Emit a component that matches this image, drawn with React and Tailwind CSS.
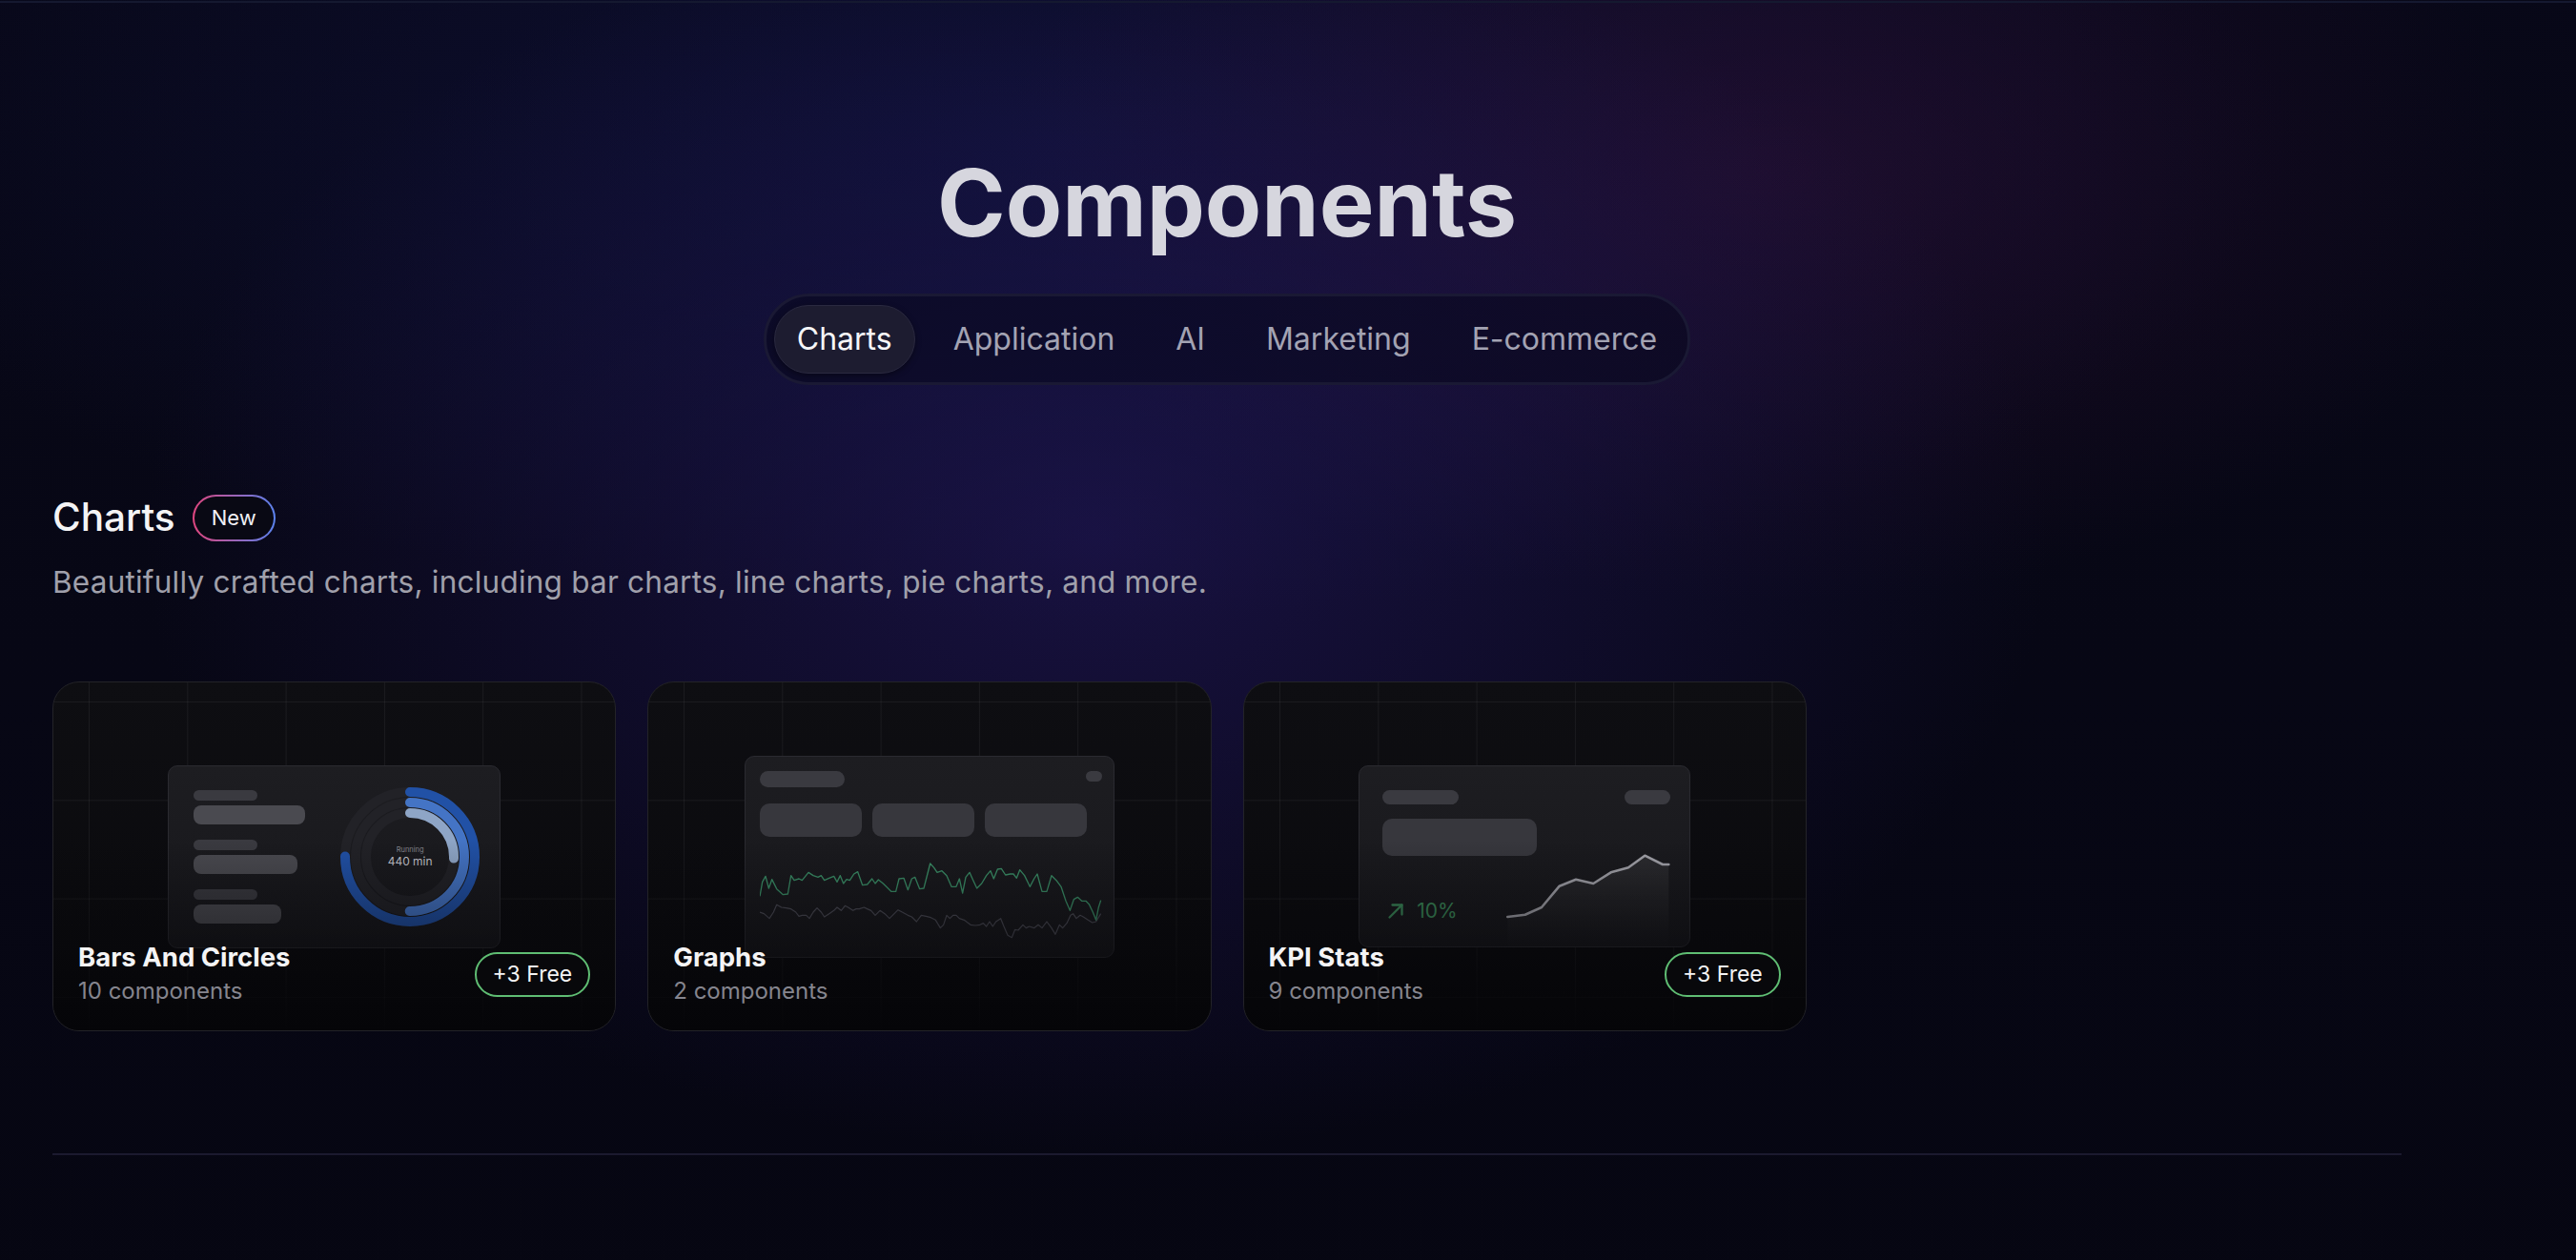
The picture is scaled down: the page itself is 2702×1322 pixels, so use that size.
import React from "react";

const greenPts = [[82,485],[90,440],[100,422],[110,460],[120,432],[135,462],[155,480],[170,478],[180,420],[190,435],[205,430],[215,435],[235,410],[250,420],[265,425],[275,420],[285,435],[300,428],[315,422],[325,440],[335,420],[345,445],[355,432],[365,435],[378,415],[390,408],[405,450],[420,448],[435,430],[445,445],[455,433],[470,445],[480,455],[495,470],[510,470],[520,430],[535,428],[548,465],[560,430],[570,425],[585,462],[598,460],[618,382],[630,395],[640,410],[655,405],[670,420],[685,455],[700,455],[710,430],[720,475],[730,425],[742,410],[752,432],[765,460],[780,445],[795,420],[808,405],[818,430],[830,400],[842,398],[855,418],[870,415],[880,415],[890,428],[900,402],[915,420],[932,455],[945,430],[955,415],[970,470],[985,470],[1000,420],[1015,435],[1030,455],[1045,500],[1058,530],[1070,495],[1082,488],[1095,500],[1108,500],[1118,510],[1130,535],[1140,560],[1148,520],[1155,498]];

const grayPts = [[82,535],[95,540],[112,555],[125,535],[135,512],[150,520],[165,522],[180,525],[195,535],[205,548],[215,545],[228,545],[238,555],[250,535],[262,522],[275,535],[285,550],[300,540],[315,530],[325,520],[338,530],[350,515],[360,520],[375,530],[385,525],[395,525],[410,520],[420,525],[432,530],[445,545],[460,530],[475,540],[490,555],[505,540],[517,528],[530,535],[548,545],[560,550],[575,565],[590,545],[605,548],[620,552],[635,560],[650,585],[660,575],[670,545],[680,555],[690,545],[700,545],[710,555],[725,560],[745,575],[760,577],[775,575],[785,570],[795,580],[805,565],[815,580],[825,565],[840,555],[850,580],[862,608],[875,615],[885,590],[895,592],[910,575],[920,585],[930,580],[945,585],[958,575],[970,585],[985,565],[1000,585],[1012,605],[1025,575],[1035,585],[1048,570],[1060,545],[1068,540],[1078,555],[1090,545],[1100,550],[1115,560],[1128,568],[1140,565],[1155,540]];

const kpiPts = [[1.3,66],[19.7,63.7],[37,56],[55.7,33.7],[73,26.7],[91.3,31],[109.7,19.3],[128,14.3],[145.3,1.7],[164,11],[170.3,11]];

const pts = (a) => a.map((p) => p.join(",")).join(" ");

function Donut() {
  const rings = [
    { r: 68, color: "#2151a6", frac: 0.75 },
    { r: 57, color: "#4474c5", frac: 0.5 },
    { r: 46, color: "#8ea5c6", frac: 0.255 },
  ];
  return (
    <div className="relative h-[148px] w-[148px] shrink-0">
      <svg width="148" height="148" viewBox="0 0 148 148">
        {rings.map(({ r, color, frac }) => {
          const c = 2 * Math.PI * r;
          return (
            <g key={r}>
              <circle cx="74" cy="74" r={r} fill="none" stroke="#222227" strokeWidth="10" />
              <circle
                cx="74"
                cy="74"
                r={r}
                fill="none"
                stroke={color}
                strokeWidth="10"
                strokeLinecap="round"
                strokeDasharray={`${c * frac} ${c}`}
                transform="rotate(-90 74 74)"
              />
            </g>
          );
        })}
      </svg>
      <div className="absolute inset-0 flex flex-col items-center justify-center">
        <span className="text-[7.5px] leading-[9px] text-[#86868e]">Running</span>
        <span className="text-[12px] leading-[15px] text-[#c2c2ca]">440 min</span>
      </div>
    </div>
  );
}

function Card({ title, count, free, children }) {
  return (
    <div className="relative flex h-[367px] items-center justify-center overflow-hidden rounded-[28px] border-[1.5px] border-[#232328] bg-[#0b0b0e] bg-[linear-gradient(to_right,rgba(255,255,255,0.055)_1px,transparent_1px),linear-gradient(to_bottom,rgba(255,255,255,0.055)_1px,transparent_1px),linear-gradient(to_bottom,#0e0e12,#09090c)] bg-[size:103.3px_103.3px,103.3px_103.3px,100%_100%] bg-[position:37px_20px,37px_20px,0_0]">
      {children}
      <div className="absolute inset-x-0 bottom-0 flex h-[200px] items-end justify-between bg-[linear-gradient(to_bottom,rgba(6,6,9,0)_0%,rgba(6,6,9,0.5)_58%,rgba(5,5,8,0.97)_100%)] px-[26px] pb-[25px]">
        <div className="flex flex-col">
          <span className="text-[27.5px] font-bold leading-[30px] text-[#f4f4f5]">{title}</span>
          <span className="mt-[5px] text-[24px] leading-[32px] text-[#85858e]">{count}</span>
        </div>
        {free && (
          <div className="mb-[10px] flex h-[47px] items-center rounded-full border-2 border-[#5fbd73] bg-[#08080b] px-[17px] text-[23px] text-[#f4f4f5]">
            +3 Free
          </div>
        )}
      </div>
    </div>
  );
}

const panelCls =
  "rounded-[10px] border border-[#2a2a30] bg-[linear-gradient(to_bottom,#1d1d21,#17171b)] overflow-hidden";

function BarsPanel() {
  return (
    <div className={`${panelCls} flex h-[192px] w-[349px] items-center pl-[26px]`}>
      <div className="flex w-[117px] flex-col gap-[16px]">
        <div className="flex flex-col gap-[5px]">
          <div className="h-[11px] w-[67px] rounded-full bg-[#3a3a40]" />
          <div className="h-[20px] w-[117px] rounded-[8px] bg-[#4a4a50]" />
        </div>
        <div className="flex flex-col gap-[5px]">
          <div className="h-[11px] w-[67px] rounded-full bg-[#3a3a40]" />
          <div className="h-[20px] w-[109px] rounded-[8px] bg-[#4a4a50]" />
        </div>
        <div className="flex flex-col gap-[5px]">
          <div className="h-[11px] w-[67px] rounded-full bg-[#3a3a40]" />
          <div className="h-[20px] w-[92px] rounded-[8px] bg-[#4a4a50]" />
        </div>
      </div>
      <div className="ml-[36px]">
        <Donut />
      </div>
    </div>
  );
}

function GraphsPanel() {
  return (
    <div className={`${panelCls} h-[212px] w-[388px] pl-[15px] pr-[12px] pt-[15px]`}>
      <div className="flex items-start justify-between">
        <div className="h-[17px] w-[89px] rounded-full bg-[#3a3a40]" />
        <div className="h-[11px] w-[17px] rounded-full bg-[#3a3a40]" />
      </div>
      <div className="mt-[17px] flex gap-[10.5px]">
        <div className="h-[35px] w-[107.5px] rounded-[10px] bg-[#37373d]" />
        <div className="h-[35px] w-[107.5px] rounded-[10px] bg-[#37373d]" />
        <div className="h-[35px] w-[107.5px] rounded-[10px] bg-[#37373d]" />
      </div>
      <svg className="mt-[24px] block" width="360" height="86.67" viewBox="82 370 1080 260">
        <polyline points={pts(grayPts)} fill="none" stroke="#4b4b55" strokeWidth="3.6" strokeLinejoin="round" />
        <polyline points={pts(greenPts)} fill="none" stroke="#3b9068" strokeWidth="4" strokeLinejoin="round" />
      </svg>
    </div>
  );
}

function KpiPanel() {
  const line = pts(kpiPts);
  return (
    <div className={`${panelCls} h-[191px] w-[348px] pl-[24px] pr-[20px] pt-[25px]`}>
      <div className="flex justify-between">
        <div className="h-[15px] w-[80px] rounded-full bg-[#3a3a40]" />
        <div className="h-[15px] w-[48px] rounded-full bg-[#3a3a40]" />
      </div>
      <div className="mt-[15px] h-[39px] w-[161.6px] rounded-[10px] bg-[#37373d]" />
      <div className="flex items-start">
        <div className="ml-[5px] mt-[47px] flex w-[136px] items-center gap-[13px] text-[21px] leading-none text-[#3c8c5b]">
          <svg width="18" height="18" viewBox="0 0 18 18" fill="none" stroke="#3c8c5b" strokeWidth="2.3" strokeLinecap="round" strokeLinejoin="round">
            <path d="M2.5 15.5 L15.5 2.5" />
            <path d="M5.5 2.5 H15.5 V12.5" />
          </svg>
          <span>10%</span>
        </div>
        <svg className="-mt-[2px] block shrink-0" width="172" height="100" viewBox="0 0 172 100">
          <defs>
            <linearGradient id="kpiFill" x1="0" y1="0" x2="0" y2="1">
              <stop offset="0" stopColor="#ffffff" stopOpacity="0.08" />
              <stop offset="1" stopColor="#ffffff" stopOpacity="0" />
            </linearGradient>
          </defs>
          <polygon points={`${line} 170.3,100 1.3,100`} fill="url(#kpiFill)" />
          <polyline points={line} fill="none" stroke="#a3a3aa" strokeWidth="2.6" strokeLinejoin="round" strokeLinecap="round" />
        </svg>
      </div>
    </div>
  );
}

const tabs = ["Charts", "Application", "AI", "Marketing", "E-commerce"];

export default function App() {
  return (
    <div className="min-h-[1322px] w-full bg-[#08081a] bg-[radial-gradient(ellipse_1000px_650px_at_1150px_560px,rgba(38,26,100,0.55),transparent),radial-gradient(ellipse_800px_450px_at_1850px_180px,rgba(70,20,70,0.33),transparent),radial-gradient(ellipse_1300px_500px_at_1100px_150px,rgba(20,24,80,0.5),transparent),linear-gradient(to_bottom,rgba(7,7,15,0.2),rgba(5,5,12,0.55))] font-['Inter',sans-serif]">
      <div className="h-[1px]" />
      <div className="h-[2px] bg-[#151930]" />
      <div className="ml-[55px] w-[2464px] pb-[108px]">
        <h1 className="pt-[161px] text-center text-[97px] font-bold leading-none text-[#d6d6de]">
          Components
        </h1>
        <div className="mt-[47px] flex justify-center">
          <div className="flex gap-[16px] rounded-full border-[3px] border-[#1a1934] bg-[rgba(8,7,28,0.55)] px-[8px] py-[9px]">
            {tabs.map((t, i) => (
              <div
                key={t}
                className={
                  i === 0
                    ? "flex h-[72px] items-center rounded-full border border-[#2a2940] bg-[#1d1c30] px-[23px] text-[32px] text-[#f6f6f8] shadow-[0_2px_6px_rgba(0,0,0,0.4)]"
                    : "flex h-[72px] items-center rounded-full px-[24px] text-[32px] text-[#a3a3b3]"
                }
              >
                {t}
              </div>
            ))}
          </div>
        </div>

        <div className="mt-[115px] flex items-center gap-[18px]">
          <span className="text-[40.5px] font-medium leading-none text-[#f4f4f5]">Charts</span>
          <span className="flex h-[49px] w-[87px] rounded-full bg-[linear-gradient(to_right,#e0467f,#5a82ee)] p-[2px]">
            <span className="flex flex-1 items-center justify-center rounded-full bg-[#090914] text-[22px] text-[#f0f0f5]">
              New
            </span>
          </span>
        </div>
        <p className="mt-[23px] text-[31.5px] leading-[40px] tracking-[0.007em] text-[#a0a0ab]">
          Beautifully crafted charts, including bar charts, line charts, pie charts, and more.
        </p>

        <div className="mt-[84px] grid grid-cols-4 gap-[33px]">
          <Card title="Bars And Circles" count="10 components" free>
            <BarsPanel />
          </Card>
          <Card title="Graphs" count="2 components">
            <GraphsPanel />
          </Card>
          <Card title="KPI Stats" count="9 components" free>
            <KpiPanel />
          </Card>
        </div>

        <div className="mt-[128px] h-[1.5px] bg-[#1b1a2f]" />
      </div>
    </div>
  );
}
